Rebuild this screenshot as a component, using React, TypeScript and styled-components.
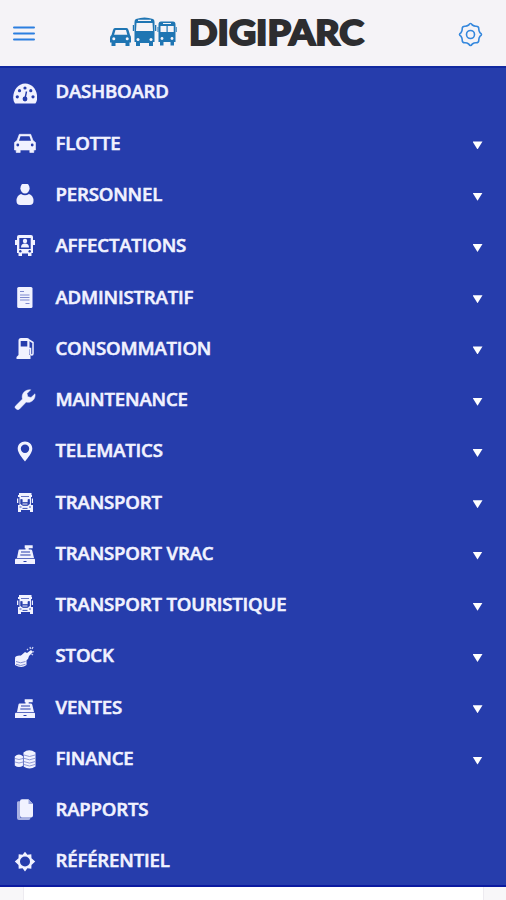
import React from "react";
import styled, { createGlobalStyle } from "styled-components";

const GlobalStyle = createGlobalStyle`
  html, body { margin: 0; background: #fefefe; }
  * { box-sizing: border-box; }
  #root { height: 900px; overflow: hidden; }
`;

const BLUE = "#263dac";

const Screen = styled.div`
  width: 506px;
  height: 900px;
  display: flex;
  flex-direction: column;
  overflow: hidden;
  font-family: "Open Sans", "Noto Sans", sans-serif;
`;

const Header = styled.header`
  flex: 0 0 66px;
  display: grid;
  grid-template-columns: 109px 1fr 48px;
  align-items: center;
  background: #f5f3f7;
`;

const HeaderButton = styled.button<{ $indent?: number }>`
  display: flex;
  align-items: center;
  height: 66px;
  padding: 2px 0 0 ${(p) => p.$indent ?? 0}px;
  border: 0;
  background: none;
`;

const Brand = styled.div`
  display: flex;
  align-items: center;
  gap: 12px;
  height: 66px;
`;

const BrandArt = styled.svg`
  display: block;
  margin-bottom: 3px;
  fill: #1f75b3;
`;

const BrandName = styled.svg`
  display: block;
  font-family: Lato, sans-serif;
  font-weight: 900;
  font-size: 34px;
  fill: #2d2d30;
  stroke: #2d2d30;
  stroke-width: 1.8px;
`;

const Menu = styled.nav`
  flex: 0 0 821px;
  min-height: 0;
  display: grid;
  grid-template-rows: repeat(16, 51.27px);
  background: ${BLUE};
  border-top: 2px solid #1229a0;
  border-bottom: 2px solid #0b1aa0;
  height: 821px;
  overflow: hidden;
`;

const Item = styled.a`
  display: grid;
  grid-template-columns: 24px 1fr 10px;
  column-gap: 18.5px;
  align-items: center;
  height: 51.27px;
  padding: 0 23.5px 0 13px;
  margin-top: -1.7px;
  color: #f1f2ff;
`;

const IconBox = styled.svg`
  display: block;
  width: 24px;
  height: 24px;
  margin-top: 3.4px;
  fill: #f1f2ff;
`;

const Label = styled.span`
  font-size: 18.6px;
  font-weight: 600;
  line-height: 26px;
  margin-bottom: 1px;
  letter-spacing: -0.17px;
  white-space: nowrap;
  -webkit-text-stroke: 0.55px #f1f2ff;
`;

const Caret = styled.span`
  width: 10px;
  height: 8px;
  margin-top: 4.4px;
  background: #fff;
  clip-path: polygon(0 0, 100% 0, 50% 100%);
`;

const Page = styled.main`
  flex: 1;
  padding: 0 22px 0 23px;
  background: #f8f7f9;
`;

const Sheet = styled.div`
  height: 100%;
  background: #fff;
  border: solid #edebf0;
  border-width: 0 1px;
`;

const Register = () => (
  <>
    <path d="M6.500 6.500h6V5.300h-.8V2.200h8v3.100h-4v1.200h2.200q1 0 1.300 1l1.800 7.500H4l1.500-7.500q.2-1 1-1z" />
    <path d="M8 9h9M7.300 12h10.300" stroke={BLUE} strokeWidth="1.100" />
    <path d="M3 15.800h18.200q.8 0 .8.800V21H2v-4.400q0-.8 1-.8z" />
    <path d="M10.500 18.500h3" stroke={BLUE} strokeWidth="1" />
  </>
);

const Truck = () => (
  <>
    <path d="M6 1h12.500v2H19v2H18v8h2v7h-3v-2H8v2H5v-7h1.500V5H5V3h1z" />
    <path d="M4 6.500h1.300V11H4zM18.800 6.500H20V11h-1.200z" />
    <path d="M8 4.500h8M7.700 12V7.500h1.500v3h5.800v-3h1.500V12l-2 1.500h-4.500z" fill={BLUE} stroke={BLUE} strokeWidth=".7" />
    <path d="M9.500 12h5" stroke="#f1f2ff" strokeWidth="1" />
    <path d="M6.500 15h2M16 15h2M9.500 16.400h5" stroke={BLUE} strokeWidth="0.900" />
  </>
);

const icons: Record<string, React.ReactNode> = {
  gauge: (
    <>
      <path d="M2 21.500Q.2 19 .2 15.500C.2 8 5.200 1.500 12.200 1.500s12 6.500 12 14q0 3.500-1.800 6z" />
      <g fill={BLUE}>
        <circle cx="4.300" cy="14.800" r="1.600" />
        <circle cx="6.500" cy="8.700" r="1.600" />
        <circle cx="12" cy="6" r="1.600" />
        <circle cx="17.800" cy="8.700" r="1.600" />
        <circle cx="20" cy="14.800" r="1.600" />
        <circle cx="12" cy="17" r="2.400" />
      </g>
      <path d="M12 16.500 13.500 9.500" stroke={BLUE} strokeWidth="1.400" />
    </>
  ),
  car: (
    <>
      <path d="M6.300 1.300h11.400L20 7.500l2.500 2v7.500h-1.700v2.500h-4V17H7.200v2.500h-4V17H1.500V9.500L4 7.500z" strokeLinejoin="round" stroke="#f1f2ff" strokeWidth=".6" />
      <path d="M7.500 3.200h9L18 7.700H6z" fill={BLUE} />
      <circle cx="4.800" cy="12" r="1.400" fill={BLUE} />
      <circle cx="19.200" cy="12" r="1.400" fill={BLUE} />
    </>
  ),
  person: (
    <>
      <ellipse cx="12" cy="4.300" rx="4.600" ry="5.300" />
      <path d="M8 10Q12 12.500 16 10q4.500 1.500 4.500 7 0 4-4 4h-9q-4 0-4-4 0-5.500 4.500-7z" />
    </>
  ),
  bus: (
    <>
      <path d="M6 0h12q2 0 2 2v3h2v5h-2v8h-1.500v3h-3.500v-2.500H9V21H5.500v-3H4v-8H2V5h2V2q0-2 2-2z" />
      <path d="M6.300 3h11.400v11H6.300z" fill={BLUE} />
      <circle cx="12" cy="6" r="2.200" />
      <path d="M8 12.500q0-4 4-4t4 4z" />
      <circle cx="7.300" cy="16.200" r="1.200" fill={BLUE} />
      <circle cx="16.700" cy="16.200" r="1.200" fill={BLUE} />
    </>
  ),
  document: (
    <>
      <rect x="4.200" y="0" width="15.300" height="21" rx="1.500" />
      <path d="M7 4.500h4M7 8h9.500M7 10.500h9.500M7 13h9.500M12.500 16.500h4" stroke="#7e89cf" strokeWidth="1" />
    </>
  ),
  pump: (
    <>
      <path d="M5.500 2.500Q5.500 0 8 0h6q2.500 0 2.500 2.500V17H17.500v4H3.500v-2l2-2z" />
      <path d="M7.700 3h6.600v5.500H7.700z" fill={BLUE} />
      <path d="M16 2 20 4.500v11q0 1.500-1.200 1.500t-1.300-1.500V10.500H16" fill="none" stroke="#f1f2ff" strokeWidth="1.500" />
    </>
  ),
  wrench: (
    <path d="M2.700 16.800 9.500 10C8 5 12 .2 17.700.8L14 4.500l.8 3.200 3.200.8 4-3.700c.8 5.200-3.500 9.700-8.800 8.300L6.500 20q-1.500 1.500-3.500-.2t-.3-3z" stroke="#f1f2ff" strokeWidth=".5" />
  ),
  pin: (
    <path fillRule="evenodd" d="M12 .5c4.100 0 7.300 3.100 7.300 7.100 0 4.500-4.300 9-7.300 13-3-4-7.300-8.500-7.300-13C4.700 3.600 7.900.5 12 .5zM12 3.500a4.200 4.200 0 1 0 0 8.400 4.200 4.200 0 0 0 0-8.400z" />
  ),
  truck: <Truck />,
  register: <Register />,
  stock: (
    <>
      <path d="M8 9.500 12 6l2 1 4-3 2 2-4 4-1 3-4 3-3-3z" />
      <ellipse cx="7" cy="12" rx="5" ry="2.600" />
      <path d="M2 12.500q5 3 11.500 0V19q-5 4-11.500 0z" />
      <path d="M3 15.500q4.500 2.500 9.500 0M3 18.300q4.500 2.500 9.500 0" stroke="#8690d2" strokeWidth="1" fill="none" />
      <path d="m14 3 1 1M17 1l.5 2M20 1l-1 2M21 6l-1.500-.5M20 9l-1.500-1" stroke="#c9cff2" strokeWidth="1.300" />
    </>
  ),
  coins: (
    <>
      <path d="M10.500 4.500q5.500-4.500 12 0V18.500q-6 4-12 0z" />
      <path d="M1.800 8.500q4-4 8.500 0V17.500q-4.500 3-8.500 0z" />
      <path d="M11 7q5.500 3 11 0M11 10.300q5.500 3 11 0M11 13.600q5.500 3 11 0M11 16.500q5.500 3 11 0M2 10.500q4 2 8 0M2 14q4 2 8 0" fill="none" stroke="#8791d3" strokeWidth=".9" />
      <path d="M10.400 7v12" stroke={BLUE} strokeWidth=".5" />
    </>
  ),
  files: (
    <>
      <path d="M4 3.500q0-1 1-1.300h2v16.300h10.500q0 2.500-2 2.500H6q-2 0-2-2z" fill="#a8b1e2" />
      <path d="M9 .3h6.500L20 5v11.500q0 2-2 2H9q-2 0-2-2V2.300q0-2 2-2z" />
      <path d="M15.500.3V5H20z" fill="#9ea9df" />
    </>
  ),
  cog: (
    <>
      <path d="m12 .7 2.400 3.100 3.900-.5.200 3.900 3.700 3.300-3.700 3.400-.2 3.900-3.900-.5L12 20.400l-2.400-3.100-3.900.5-.2-3.900-3.700-3.400 3.700-3.300.2-3.900 3.900.5z" />
      <circle cx="12" cy="10.500" r="5" fill={BLUE} />
    </>
  ),
};

interface Entry {
  label: string;
  icon: string;
  expandable?: boolean;
}

const entries: Entry[] = [
  { label: "DASHBOARD", icon: "gauge" },
  { label: "FLOTTE", icon: "car", expandable: true },
  { label: "PERSONNEL", icon: "person", expandable: true },
  { label: "AFFECTATIONS", icon: "bus", expandable: true },
  { label: "ADMINISTRATIF", icon: "document", expandable: true },
  { label: "CONSOMMATION", icon: "pump", expandable: true },
  { label: "MAINTENANCE", icon: "wrench", expandable: true },
  { label: "TELEMATICS", icon: "pin", expandable: true },
  { label: "TRANSPORT", icon: "truck", expandable: true },
  { label: "TRANSPORT VRAC", icon: "register", expandable: true },
  { label: "TRANSPORT TOURISTIQUE", icon: "truck", expandable: true },
  { label: "STOCK", icon: "stock", expandable: true },
  { label: "VENTES", icon: "register", expandable: true },
  { label: "FINANCE", icon: "coins", expandable: true },
  { label: "RAPPORTS", icon: "files" },
  { label: "RÉFÉRENTIEL", icon: "cog" },
];

const Vehicles = () => (
  <BrandArt width="68" height="32" viewBox="109 16 68 32">
    <path d="M115 28h11.500q1.500 0 2 2l1.500 5q1 1 1 3v4.500h-1.500V46h-4v-3h-10v3h-4v-3.500H110V38q0-2 1.500-3l1.500-5q.5-2 2-2z" />
    <path d="M115.500 30h10.500l1.300 4.800h-13.200z" fill="#f5f3f7" />
    <circle cx="113.800" cy="38.800" r="1.500" fill="#f5f3f7" />
    <circle cx="127.200" cy="38.800" r="1.500" fill="#f5f3f7" />
    <path d="M136 19q8.500-3 17 0 1.500.5 1.500 3v20H153v4h-4v-3h-9v3h-4v-4h-1.500V22q0-2.500 1.500-3z" />
    <path d="M138 19.800h13v1.300h-13zM136.500 23h16l.5 8h-17z" fill="#f5f3f7" />
    <path d="M132.800 25h1.300v6h-1.300zM155 25h1.300v6H155z" />
    <circle cx="138" cy="39.500" r="1.500" fill="#f5f3f7" />
    <circle cx="151" cy="39.500" r="1.500" fill="#f5f3f7" />
    <path d="M161 21.500h12q2.500 0 2.500 3v17.500H174v3.500h-3.500V42h-7v3.500H160V42h-1.500V24.500q0-3 2.500-3z" />
    <path d="M163 23h8v1h-8zM160.500 26h6v6h-6zM167.700 26h6v6h-6z" fill="#f5f3f7" />
    <path d="M157.500 27h.9v5h-.9zM175.800 27h.9v5h-.9z" />
    <circle cx="162" cy="38.500" r="1.400" fill="#f5f3f7" />
    <circle cx="172" cy="38.500" r="1.400" fill="#f5f3f7" />
  </BrandArt>
);

export default function App() {
  return (
    <Screen>
      <GlobalStyle />
      <Header>
        <HeaderButton $indent={13} aria-label="Menu">
          <svg width="22" height="16" viewBox="0 0 22 16" stroke="#2c7fe0" strokeWidth="2" strokeLinecap="round">
            <path d="M1 1.500h20M1 7.500h20M1 13.500h20" />
          </svg>
        </HeaderButton>
        <Brand>
          <Vehicles />
          <BrandName width="180" height="66" viewBox="0 0 180 66">
            <text x="0" y="44.800" textLength="175" lengthAdjust="spacingAndGlyphs">DIGIPARC</text>
          </BrandName>
        </Brand>
        <HeaderButton aria-label="Settings">
          <svg width="25" height="25" viewBox="-12.500 -12.500 25 25" fill="none" stroke="#3487dd" strokeWidth="1.600" strokeLinejoin="round">
            <path d="M-1.800-9.500Q0-12.500 1.800-9.500 3.500-8.300 5.300-8.300 8.500-8.500 8.300-5.300 8.300-3.500 9.500-1.800 12.500 0 9.500 1.800 8.300 3.500 8.300 5.300 8.500 8.500 5.300 8.300 3.500 8.300 1.800 9.500 0 12.500-1.800 9.500-3.500 8.300-5.300 8.300-8.500 8.500-8.300 5.300-8.300 3.500-9.500 1.800-12.500 0-9.500-1.800-8.300-3.500-8.300-5.300-8.500-8.500-5.300-8.300-3.500-8.300-1.800-9.500Z" />
            <circle r="4" />
          </svg>
        </HeaderButton>
      </Header>
      <Menu>
        {entries.map((e) => (
          <Item key={e.label}>
            <IconBox viewBox="0 0 24 24">{icons[e.icon]}</IconBox>
            <Label>{e.label}</Label>
            {e.expandable && <Caret />}
          </Item>
        ))}
      </Menu>
      <Page>
        <Sheet />
      </Page>
    </Screen>
  );
}
